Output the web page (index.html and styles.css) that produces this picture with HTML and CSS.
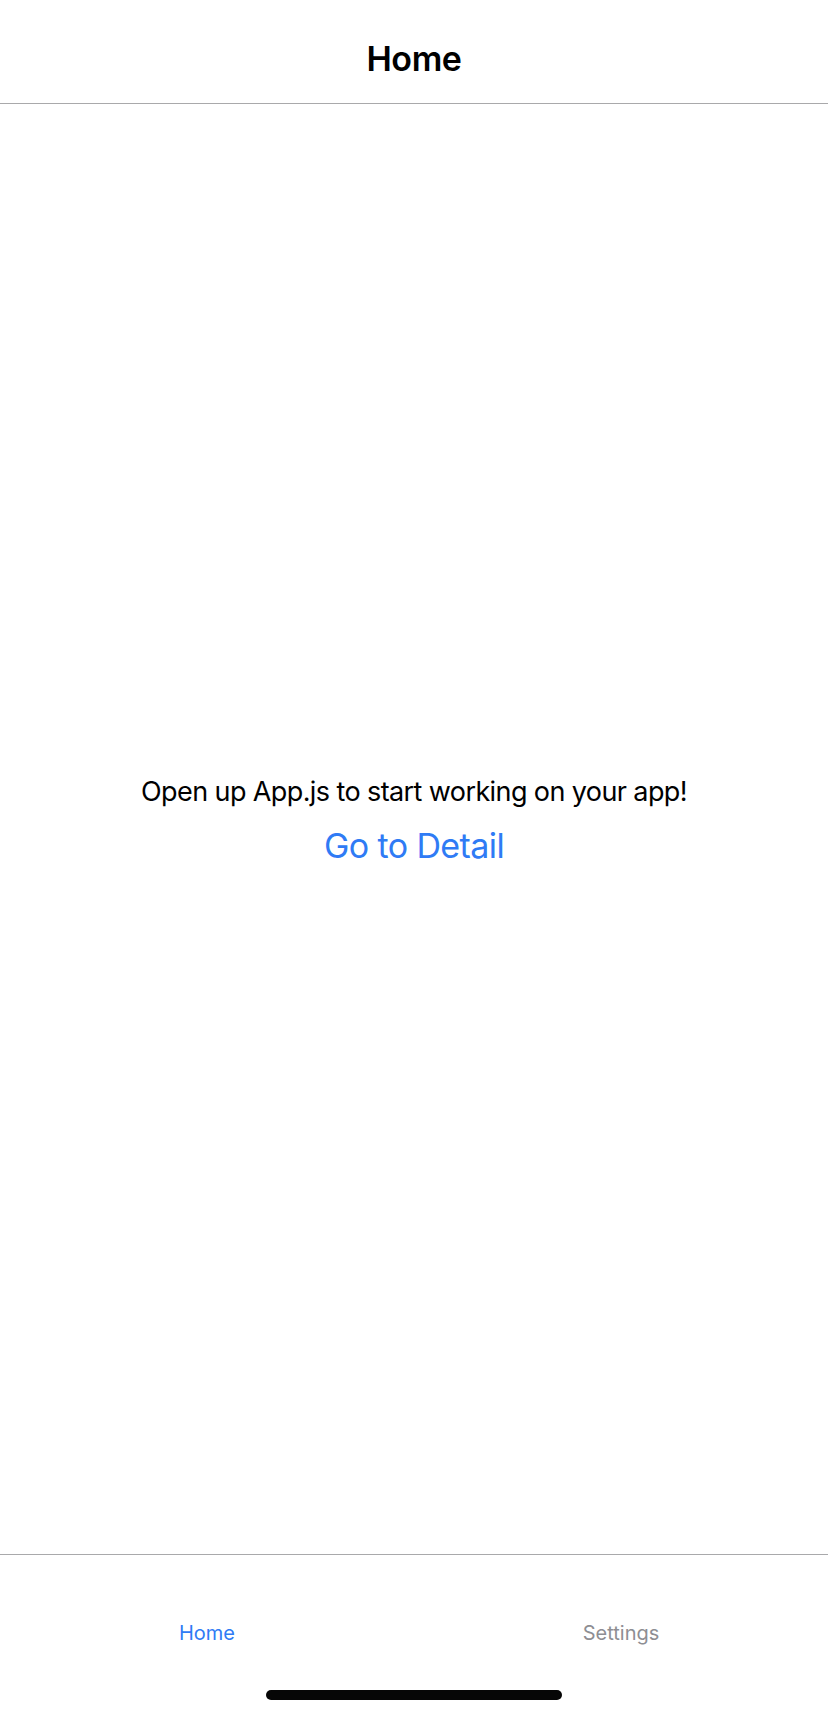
FILE: index.html
```html
<!DOCTYPE html>
<html lang="en">
<head>
<meta charset="utf-8">
<title>Home</title>
<link rel="stylesheet" href="styles.css">
</head>
<body>
<div class="app">
  <header class="header">
    <h1 class="title">Home</h1>
  </header>
  <main class="content">
    <p class="message">Open up App.js to start working on your app!</p>
    <button class="link-button" type="button">Go to Detail</button>
  </main>
  <nav class="tabbar">
    <div class="tabs">
      <div class="tab tab-active">Home</div>
      <div class="tab">Settings</div>
    </div>
    <div class="home-indicator"></div>
  </nav>
</div>
</body>
</html>
```

FILE: styles.css
```css
html, body {
  margin: 0;
  padding: 0;
  background: #ffffff;
}

body {
  font-family: "Inter", "Liberation Sans", sans-serif;
  color: #000000;
}

.app {
  width: 828px;
  height: 1720px;
  display: flex;
  flex-direction: column;
  background: #ffffff;
}

.header {
  height: 89px;
  padding-top: 14px;
  border-bottom: 1px solid #a9a9ab;
  display: flex;
  align-items: center;
  justify-content: center;
}

.title {
  margin: 0;
  font-size: 34px;
  font-weight: 600;
  letter-spacing: -0.4px;
  line-height: 40px;
}

.content {
  flex: 1;
  display: flex;
  flex-direction: column;
  align-items: center;
  justify-content: center;
  padding-bottom: 8px;
}

.message {
  margin: 0 0 8px;
  font-size: 27px;
  line-height: 34px;
  letter-spacing: -0.6px;
  color: #000000;
}

.link-button {
  border: 0;
  background: transparent;
  padding: 8px 16px;
  margin: 0;
  font-family: inherit;
  font-size: 34px;
  line-height: 42px;
  letter-spacing: -0.6px;
  color: #2f7bf5;
}

.tabbar {
  border-top: 1px solid #a9a9ab;
  display: flex;
  flex-direction: column;
  align-items: center;
  padding-bottom: 20px;
}

.tabs {
  align-self: stretch;
  height: 135px;
  display: flex;
}

.tab {
  flex: 1;
  text-align: center;
  padding-top: 66px;
  font-size: 20px;
  line-height: 24px;
  color: #8e8e93;
}

.tab-active {
  color: #2f7bf5;
}

.home-indicator {
  width: 296px;
  height: 10px;
  border-radius: 5px;
  background: #060606;
}
```
